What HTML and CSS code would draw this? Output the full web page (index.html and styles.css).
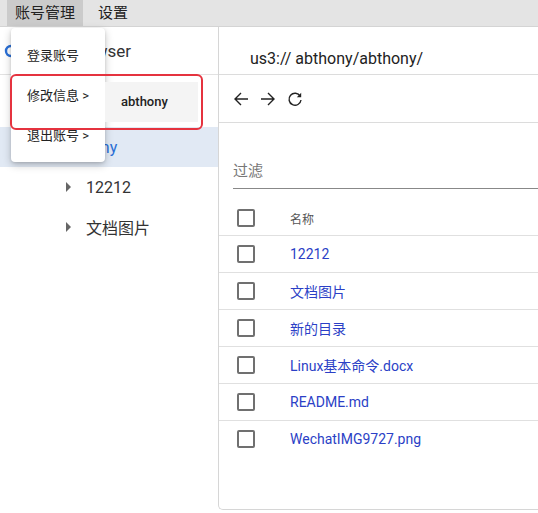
FILE: index.html
```html
<!DOCTYPE html>
<html lang="zh">
<head>
<meta charset="utf-8">
<link rel="stylesheet" href="styles.css">
</head>
<body>
<div class="menubar">
  <div class="mb-item active">账号管理</div>
  <div class="mb-item">设置</div>
</div>
<div class="main">
  <aside class="sidebar">
    <div class="side-head">
      <svg class="logo" width="14" height="14" viewBox="0 0 14 14"><circle cx="7" cy="7" r="5" fill="none" stroke="#2a6fd6" stroke-width="2.4"/></svg>
      <span class="side-title">US3 Browser</span>
    </div>
    <div class="tree">
      <div class="tree-spacer"></div>
      <div class="tree-row lvl1 selected"><span class="caret down"></span><span class="sel-text">abthony</span></div>
      <div class="tree-row lvl2"><span class="caret"></span><span>12212</span></div>
      <div class="tree-row lvl2"><span class="caret"></span><span>文档图片</span></div>
    </div>
  </aside>
  <section class="panel">
    <div class="path">us3:// abthony/abthony/</div>
    <div class="toolbar">
      <svg width="16" height="16" viewBox="0 0 16 16"><path d="M15 8H2M8 2L2 8l6 6" fill="none" stroke="#222" stroke-width="1.4"/></svg>
      <svg width="16" height="16" viewBox="0 0 16 16"><path d="M1 8h13M8 2l6 6-6 6" fill="none" stroke="#222" stroke-width="1.4"/></svg>
      <svg width="16" height="16" viewBox="0 0 16 16"><path d="M13.2 5.2A6 6 0 1 0 14 9" fill="none" stroke="#222" stroke-width="1.4"/><path d="M14.2 1.8v4.4H9.8z" fill="#222"/></svg>
    </div>
    <div class="filter"><span class="filter-label">过滤</span></div>
    <div class="table">
      <div class="t-row head"><span class="cb"></span><span class="t-name">名称</span></div>
      <div class="t-row"><span class="cb"></span><span class="t-link">12212</span></div>
      <div class="t-row"><span class="cb"></span><span class="t-link">文档图片</span></div>
      <div class="t-row"><span class="cb"></span><span class="t-link">新的目录</span></div>
      <div class="t-row"><span class="cb"></span><span class="t-link">Linux基本命令.docx</span></div>
      <div class="t-row"><span class="cb"></span><span class="t-link">README.md</span></div>
      <div class="t-row last"><span class="cb"></span><span class="t-link">WechatIMG9727.png</span></div>
    </div>
  </section>
</div>

<div class="menu">
  <div class="menu-item">登录账号</div>
  <div class="menu-item">修改信息 &gt;</div>
  <div class="menu-item">退出账号 &gt;</div>
</div>
<div class="submenu">abthony</div>
<div class="highlight"></div>
</body>
</html>
```
FILE: styles.css
```css
html, body {
  margin: 0;
  padding: 0;
  background: #fff;
}
body {
  font-family: Roboto, "Noto Sans CJK SC", sans-serif;
  color: #222;
  width: 538px;
  height: 513px;
  overflow: hidden;
  position: relative;
}
.menubar {
  height: 26px;
  background: #e4e4e4;
  border-bottom: 1px solid #d4d4d4;
  display: flex;
  align-items: stretch;
  padding-left: 7px;
}
.mb-item {
  font-size: 15px;
  line-height: 27px;
  padding: 0 8px;
  margin-right: 7px;
  color: #222;
}
.mb-item.active {
  background: #cbcbcb;
}
.main {
  display: flex;
  height: 483px;
}
.sidebar {
  width: 218px;
  flex: none;
}
.side-head {
  height: 47px;
  border-bottom: 1px solid #e2e2e2;
  display: flex;
  align-items: center;
  padding-left: 4px;
  gap: 16px;
}
.side-title {
  font-size: 17px;
  color: #333;
}
.tree {
  display: flex;
  flex-direction: column;
}
.tree-spacer {
  height: 52px;
}
.tree-row {
  height: 40px;
  display: flex;
  align-items: center;
  font-size: 16px;
  color: #333;
  gap: 15px;
}
.tree-row.lvl1 {
  padding-left: 35px;
}
.tree-row.lvl2 {
  padding-left: 66px;
}
.tree-row.selected {
  background: #e1e9f4;
}
.sel-text {
  color: #2a6fd6;
}
.caret {
  width: 0;
  height: 0;
  border-top: 5px solid transparent;
  border-bottom: 5px solid transparent;
  border-left: 5px solid #666;
}
.caret.down {
  border-left: 5px solid transparent;
  border-right: 5px solid transparent;
  border-top: 5px solid #666;
  border-bottom: 0;
}
.panel {
  flex: 1;
  border-left: 1px solid #d6d6d6;
  border-bottom: 1px solid #d6d6d6;
  border-bottom-left-radius: 5px;
  display: flex;
  flex-direction: column;
  height: 482px;
}
.path {
  height: 47px;
  border-bottom: 1px solid #dcdcdc;
  font-size: 16px;
  line-height: 63px;
  padding-left: 31px;
  color: #222;
}
.toolbar {
  height: 48px;
  border-bottom: 1px solid #dcdcdc;
  display: flex;
  align-items: center;
  padding-left: 14px;
  gap: 11px;
  padding-top: 1px;
  box-sizing: border-box;
}
.filter {
  margin: 0 0 0 14px;
  height: 65px;
  border-bottom: 1px solid #888;
  display: flex;
  align-items: flex-end;
}
.filter-label {
  font-size: 15px;
  color: #777;
  padding-bottom: 8px;
}
.table {
  margin-top: 10px;
  display: flex;
  flex-direction: column;
}
.t-row {
  height: 36px;
  border-bottom: 1px solid #e0e0e0;
  display: flex;
  align-items: center;
  padding-left: 18px;
}
.t-row.head {
  padding-top: 2px;
  height: 34px;
}
.t-row.last {
  border-bottom: 0;
}
.cb {
  width: 14px;
  height: 14px;
  border: 2px solid #707070;
  border-radius: 2px;
  flex: none;
}
.t-name {
  margin-left: 35px;
  font-size: 12px;
  color: #555;
}
.t-link {
  margin-left: 35px;
  font-size: 14px;
  color: #2b3fc6;
}
.menu {
  position: absolute;
  left: 11px;
  top: 28px;
  width: 94px;
  padding: 7px 0;
  background: #fff;
  border-radius: 4px;
  box-shadow: 0 3px 8px rgba(0,0,0,0.22), 0 1px 3px rgba(0,0,0,0.12);
}
.menu-item {
  height: 40px;
  line-height: 41px;
  padding-left: 16px;
  font-size: 13px;
  color: #222;
}
.submenu {
  position: absolute;
  left: 105px;
  top: 82px;
  width: 93px;
  height: 40px;
  line-height: 40px;
  background: #f4f4f4;
  font-size: 13px;
  font-weight: 500;
  padding-left: 16px;
  box-sizing: border-box;
  color: #222;
}
.highlight {
  position: absolute;
  left: 10px;
  top: 74px;
  width: 189px;
  height: 52px;
  border: 2px solid #e5333f;
  border-radius: 6px;
}
```
